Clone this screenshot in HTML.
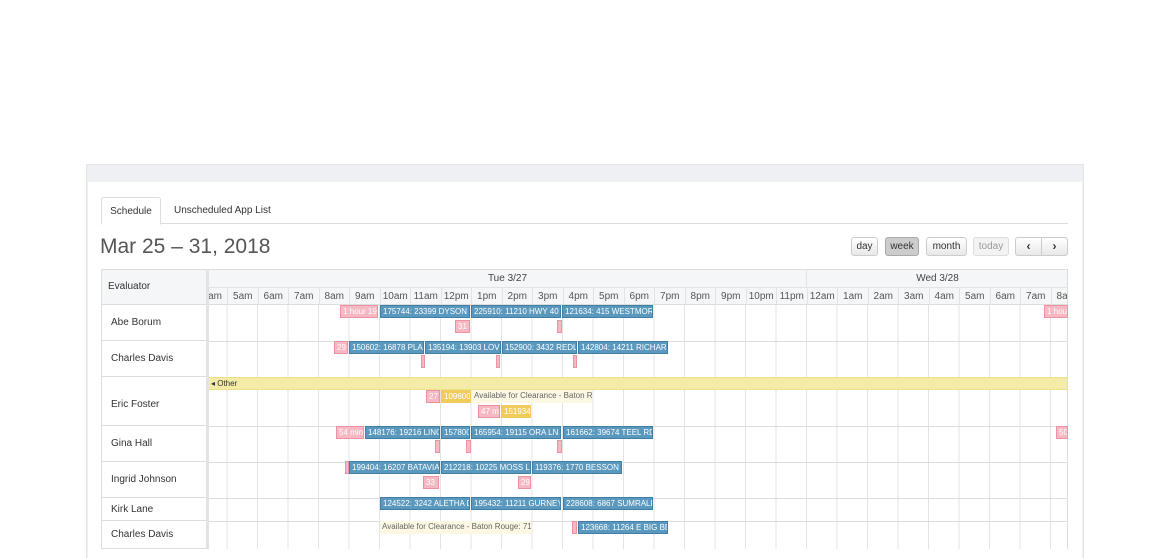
<!DOCTYPE html>
<html><head><meta charset="utf-8"><style>
*{box-sizing:border-box;margin:0;padding:0}
html{width:1170px;height:558px;overflow:hidden}
body{width:1170px;height:558px;background:#fff;font-family:"Liberation Sans",sans-serif;color:#333;position:relative;overflow:hidden}
.outer{position:absolute;left:86px;top:164px;width:998px;height:394px;background:#eef0f3;border:1px solid #e2e4e8;border-bottom:none}
.inner{position:absolute;left:88px;top:182px;width:994px;height:376px;background:#fff}
.tabs{position:absolute;left:101px;top:197px;width:967px;height:27px;border-bottom:1px solid #ddd}
.tab{position:absolute;top:0;height:28px;font-size:10px;line-height:27px}
.tab.act{left:0;width:60px;text-align:center;border:1px solid #ddd;border-bottom-color:#fff;background:#fff;border-radius:3px 3px 0 0}
h1{position:absolute;left:100px;top:235px;font-size:21px;font-weight:normal;color:#555}
.btn{position:absolute;top:237px;height:19px;font-size:10px;line-height:17px;text-align:center;border:1px solid #ccc;border-radius:3px;background:linear-gradient(#fff,#e8e8e8);color:#333}
.a{position:absolute;}
.res{position:absolute;left:101px;width:106px;border-left:1px solid #ddd;border-top:1px solid #ddd;font-size:10px;padding-left:9px}
.time{position:absolute;left:209px;top:269px;width:859px;height:280px;overflow:hidden;border-top:1px solid #ddd;border-right:1px solid #ddd}
.hdr{position:absolute;left:0;top:0;width:859px;height:35px;background:#f5f6f8;border-bottom:1px solid #ddd}
.hrs{position:absolute;left:-12.5px;top:17px;display:flex;border-top:1px solid #e3e3e3;height:17px}
.hrs span{flex:0 0 30.5px;width:30.5px;text-align:center;font-size:10px;line-height:17px;color:#555;border-left:1px solid #e3e3e3}
.body{position:absolute;left:0;top:35px;width:859px;height:245px;background:repeating-linear-gradient(to right,transparent 0 17.5px,#e3e3e3 17.5px 18.5px,transparent 18.5px 30.5px);border-bottom:1px solid #ddd}
.hl{position:absolute;left:0;width:859px;height:1px;background:#ddd}
.e{position:absolute;height:13px;font-size:8px;line-height:12px;color:#fff;white-space:nowrap;overflow:hidden;padding-left:2px}
.b{background:#5a98bd;border:1px solid #3f7fa6}
.p{background:#f6b8c2;border:1px solid #eb93a3}
.y{background:#f1cc5c;border:1px solid #f1cc5c}
.l{background:#fcf8e3;color:#666;border:none}
</style></head><body>
<div class="outer"></div>
<div class="inner"></div>
<div class="tabs"><div class="tab act">Schedule</div><div class="tab" style="left:73px">Unscheduled App List</div></div>
<h1>Mar 25 – 31, 2018</h1>
<div class="btn" style="left:851px;width:27px">day</div>
<div class="btn" style="left:885px;width:34px;background:#ccc;border-color:#aaa">week</div>
<div class="btn" style="left:926px;width:41px">month</div>
<div class="btn" style="left:973px;width:36px;color:#999;border-color:#ddd;background:#f3f3f3">today</div>
<div class="btn" style="left:1015px;width:27px;border-radius:3px 0 0 3px;font-weight:bold;font-size:12px">‹</div>
<div class="btn" style="left:1041px;width:27px;border-radius:0 3px 3px 0;font-weight:bold;font-size:12px">›</div>

<div class="res" style="top:269px;height:35px;background:#f5f6f8;line-height:33px;padding-left:6px;font-size:10px">Evaluator</div>
<div class="res" style="top:304px;height:36px;line-height:36px">Abe Borum</div>
<div class="res" style="top:340px;height:36px;line-height:36px">Charles Davis</div>
<div class="res" style="top:376px;height:49px;line-height:56px">Eric Foster</div>
<div class="res" style="top:425px;height:36px;line-height:36px">Gina Hall</div>
<div class="res" style="top:461px;height:36px;line-height:36px">Ingrid Johnson</div>
<div class="res" style="top:497px;height:23px;line-height:23px">Kirk Lane</div>
<div class="res" style="top:520px;height:29px;line-height:28px;border-bottom:1px solid #ddd">Charles Davis</div>
<div class="a" style="left:206px;top:269px;width:3px;height:280px;background:#e3e3e3"></div>

<div class="time">
<div class="hdr">
<div class="a" style="left:0;width:597px;top:0;height:17px;font-size:10px;line-height:17px;text-align:center;color:#444">Tue 3/27</div>
<div class="a" style="left:597px;width:262px;top:0;height:17px;font-size:10px;line-height:17px;text-align:center;color:#444;border-left:1px solid #e3e3e3">Wed 3/28</div>
<div class="hrs"><span>4am</span><span>5am</span><span>6am</span><span>7am</span><span>8am</span><span>9am</span><span>10am</span><span>11am</span><span>12pm</span><span>1pm</span><span>2pm</span><span>3pm</span><span>4pm</span><span>5pm</span><span>6pm</span><span>7pm</span><span>8pm</span><span>9pm</span><span>10pm</span><span>11pm</span><span>12am</span><span>1am</span><span>2am</span><span>3am</span><span>4am</span><span>5am</span><span>6am</span><span>7am</span><span>8am</span></div>
</div>
<div class="body">
<div class="hl" style="top:36px"></div><div class="hl" style="top:72px"></div><div class="hl" style="top:121px"></div><div class="hl" style="top:157px"></div><div class="hl" style="top:193px"></div><div class="hl" style="top:216px"></div>
<div class="a" style="left:0;top:72px;width:859px;height:13px;background:#f3eba6;border-top:1px solid #ece08a;border-bottom:1px solid #ece08a;font-size:8px;line-height:11px;padding-left:2px;color:#333">◂ Other</div>
</div>
</div>

<div class="e p" style="left:340px;top:305px;width:38px">1 hour 19</div>
<div class="e b" style="left:380px;top:305px;width:90px">175744: 23399 DYSON LN</div>
<div class="e b" style="left:471px;top:305px;width:90px">225910: 11210 HWY 40 W</div>
<div class="e b" style="left:562px;top:305px;width:91px">121634: 415 WESTMORE</div>
<div class="e p" style="left:455px;top:320px;width:15px">31</div>
<div class="e p" style="left:557px;top:320px;width:5px"></div>
<div class="e p" style="left:1044px;top:305px;width:24px">1 hour</div>

<div class="e p" style="left:334px;top:341px;width:14px">29</div>
<div class="e b" style="left:349px;top:341px;width:75px">150602: 16878 PLANK</div>
<div class="e b" style="left:425px;top:341px;width:76px">135194: 13903 LOVE</div>
<div class="e b" style="left:502px;top:341px;width:75px">152900: 3432 REDLAND</div>
<div class="e b" style="left:578px;top:341px;width:90px">142804: 14211 RICHARDS</div>
<div class="e p" style="left:421px;top:355px;width:4px"></div>
<div class="e p" style="left:496px;top:355px;width:4px"></div>
<div class="e p" style="left:573px;top:355px;width:4px"></div>

<div class="e p" style="left:426px;top:390px;width:14px">27</div>
<div class="e y" style="left:441px;top:390px;width:30px">109600</div>
<div class="e l" style="left:472px;top:390px;width:120px">Available for Clearance - Baton Rouge</div>
<div class="e p" style="left:478px;top:405px;width:22px">47 min</div>
<div class="e y" style="left:501px;top:405px;width:30px">151934</div>

<div class="e p" style="left:336px;top:426px;width:28px">54 min</div>
<div class="e b" style="left:365px;top:426px;width:75px">148176: 19216 LINCOLN</div>
<div class="e b" style="left:441px;top:426px;width:29px">157800</div>
<div class="e b" style="left:471px;top:426px;width:90px">165954: 19115 ORA LN</div>
<div class="e b" style="left:563px;top:426px;width:90px">161662: 39674 TEEL RD</div>
<div class="e p" style="left:435px;top:440px;width:5px"></div>
<div class="e p" style="left:466px;top:440px;width:5px"></div>
<div class="e p" style="left:557px;top:440px;width:5px"></div>
<div class="e p" style="left:1056px;top:426px;width:12px">50</div>

<div class="e p" style="left:345px;top:461px;width:4px"></div>
<div class="e b" style="left:349px;top:461px;width:91px">199404: 16207 BATAVIA...</div>
<div class="e b" style="left:441px;top:461px;width:90px">212218: 10225 MOSS LEAF</div>
<div class="e b" style="left:532px;top:461px;width:90px">119376: 1770 BESSON LN</div>
<div class="e p" style="left:423px;top:476px;width:16px">33</div>
<div class="e p" style="left:518px;top:476px;width:13px">29</div>

<div class="e b" style="left:380px;top:497px;width:90px">124522: 3242 ALETHA DR</div>
<div class="e b" style="left:471px;top:497px;width:90px">195432: 11211 GURNEY</div>
<div class="e b" style="left:563px;top:497px;width:90px">228608: 6867 SUMRALL</div>

<div class="e l" style="left:380px;top:521px;width:151px">Available for Clearance - Baton Rouge: 710</div>
<div class="e p" style="left:572px;top:521px;width:5px"></div>
<div class="e b" style="left:578px;top:521px;width:90px">123668: 11264 E BIG BEND</div>
</body></html>
